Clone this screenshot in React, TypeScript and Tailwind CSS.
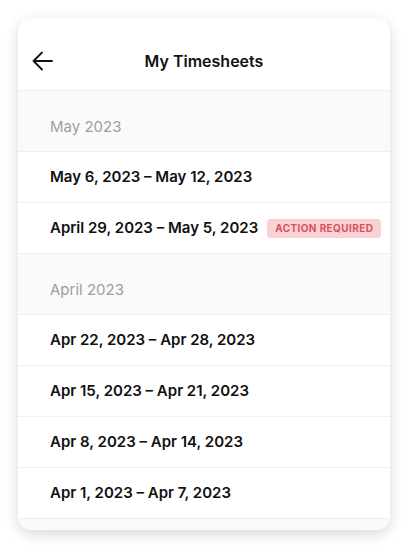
const font = { fontFamily: '"Inter", "Liberation Sans", sans-serif' };

type Row = { label: string; badge?: string };
type Section = { month: string; rows: Row[] };

const sections: Section[] = [
  {
    month: "May 2023",
    rows: [
      { label: "May 6, 2023 – May 12, 2023" },
      { label: "April 29, 2023 – May 5, 2023", badge: "Action Required" },
    ],
  },
  {
    month: "April 2023",
    rows: [
      { label: "Apr 22, 2023 – Apr 28, 2023" },
      { label: "Apr 15, 2023 – Apr 21, 2023" },
      { label: "Apr 8, 2023 – Apr 14, 2023" },
      { label: "Apr 1, 2023 – Apr 7, 2023" },
    ],
  },
];

function BackArrow() {
  return (
    <svg width="22" height="22" viewBox="0 0 22 22" fill="none" stroke="#111" strokeWidth="1.8" strokeLinecap="round" strokeLinejoin="round">
      <path d="M20 11H2" />
      <path d="M10 2.5L1.5 11L10 19.5" />
    </svg>
  );
}

export default function App() {
  return (
    <div className="w-[408px] h-[549px] bg-white p-[18px]" style={font}>
      <div className="w-[372px] h-[512px] rounded-[14px] bg-white overflow-hidden shadow-[0_4px_14px_rgba(0,0,0,0.16)] flex flex-col">
        <div className="h-[73px] shrink-0 relative flex items-center justify-center border-b border-[#f0f0f0]">
          <div className="absolute left-[14px] top-[32px]">
            <BackArrow />
          </div>
          <span className="text-[16px] font-semibold text-[#111] mt-[14px]">My Timesheets</span>
        </div>
        {sections.map((s) => (
          <div key={s.month}>
            <div className="h-[61px] bg-[#fafafa] border-b border-[#f0f0f0] flex items-end pl-[32px] pb-[13px]">
              <span className="text-[15px] text-[#9e9e9e]">{s.month}</span>
            </div>
            {s.rows.map((r) => (
              <div key={r.label} className="h-[51px] border-b border-[#f0f0f0] flex items-center pl-[32px] gap-[9px]">
                <span className="text-[15px] font-semibold text-[#111] pt-[1px]">{r.label}</span>
                {r.badge && (
                  <span className="h-[19px] px-[8px] rounded-[4px] bg-[#fad1d4] text-[#d5545a] text-[10px] font-bold uppercase tracking-[0.4px] flex items-center">
                    {r.badge}
                  </span>
                )}
              </div>
            ))}
          </div>
        ))}
        <div className="flex-1 bg-[#fafafa]" />
      </div>
    </div>
  );
}
